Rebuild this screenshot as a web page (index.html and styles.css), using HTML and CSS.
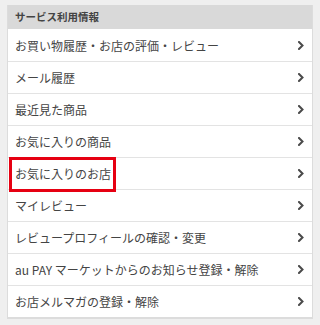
FILE: index.html
```html
<!DOCTYPE html>
<html lang="ja">
<head>
<meta charset="utf-8">
<link rel="stylesheet" href="styles.css">
</head>
<body>
<div class="card">
  <div class="card-head">サービス利用情報</div>
  <ul class="menu">
    <li class="item"><span class="label">お買い物履歴・お店の評価・レビュー</span><svg class="chev" viewBox="0 0 6 9" width="6" height="9"><polyline points="1,1 4.5,4.5 1,8"/></svg></li>
    <li class="item"><span class="label">メール履歴</span><svg class="chev" viewBox="0 0 6 9" width="6" height="9"><polyline points="1,1 4.5,4.5 1,8"/></svg></li>
    <li class="item"><span class="label">最近見た商品</span><svg class="chev" viewBox="0 0 6 9" width="6" height="9"><polyline points="1,1 4.5,4.5 1,8"/></svg></li>
    <li class="item"><span class="label">お気に入りの商品</span><svg class="chev" viewBox="0 0 6 9" width="6" height="9"><polyline points="1,1 4.5,4.5 1,8"/></svg></li>
    <li class="item"><span class="label">お気に入りのお店</span><span class="highlight"></span><svg class="chev" viewBox="0 0 6 9" width="6" height="9"><polyline points="1,1 4.5,4.5 1,8"/></svg></li>
    <li class="item"><span class="label">マイレビュー</span><svg class="chev" viewBox="0 0 6 9" width="6" height="9"><polyline points="1,1 4.5,4.5 1,8"/></svg></li>
    <li class="item"><span class="label">レビュープロフィールの確認・変更</span><svg class="chev" viewBox="0 0 6 9" width="6" height="9"><polyline points="1,1 4.5,4.5 1,8"/></svg></li>
    <li class="item"><span class="label">au PAY マーケットからのお知らせ登録・解除</span><svg class="chev" viewBox="0 0 6 9" width="6" height="9"><polyline points="1,1 4.5,4.5 1,8"/></svg></li>
    <li class="item"><span class="label">お店メルマガの登録・解除</span><svg class="chev" viewBox="0 0 6 9" width="6" height="9"><polyline points="1,1 4.5,4.5 1,8"/></svg></li>
  </ul>
</div>
</body>
</html>
```
FILE: styles.css
```css
html, body {
  margin: 0;
  padding: 0;
  background: #efefef;
}
body {
  padding: 5px 7px 0 7px;
  font-family: "Noto Sans CJK JP", "Noto Sans", sans-serif;
  color: #444;
}
.card {
  background: #fff;
  border: 1px solid #dcdcdc;
  border-top: none;
}
.card-head {
  height: 24px;
  background: #d9d9d9;
  font-size: 10.5px;
  font-weight: bold;
  line-height: 24px;
  padding-left: 7px;
  color: #444;
}
.menu {
  list-style: none;
  margin: 0;
  padding: 0;
  margin-top: 1px;
}
.item {
  position: relative;
  height: 31px;
  border-bottom: 1px solid #e3e3e3;
  display: flex;
  align-items: center;
  justify-content: space-between;
  padding: 0 8px 0 7px;
  font-size: 12px;
  color: #444;
}
.item:last-child {
  border-bottom: 1px solid #dcdcdc;
}
.label {
  white-space: nowrap;
}
.chev {
  flex: none;
}
.chev polyline {
  fill: none;
  stroke: #4a4a4a;
  stroke-width: 2;
  stroke-linecap: square;
  stroke-linejoin: miter;
}
.highlight {
  position: absolute;
  left: 1px;
  top: -1px;
  width: 107px;
  height: 35px;
  box-sizing: border-box;
  border: 3px solid #e60012;
}
```
